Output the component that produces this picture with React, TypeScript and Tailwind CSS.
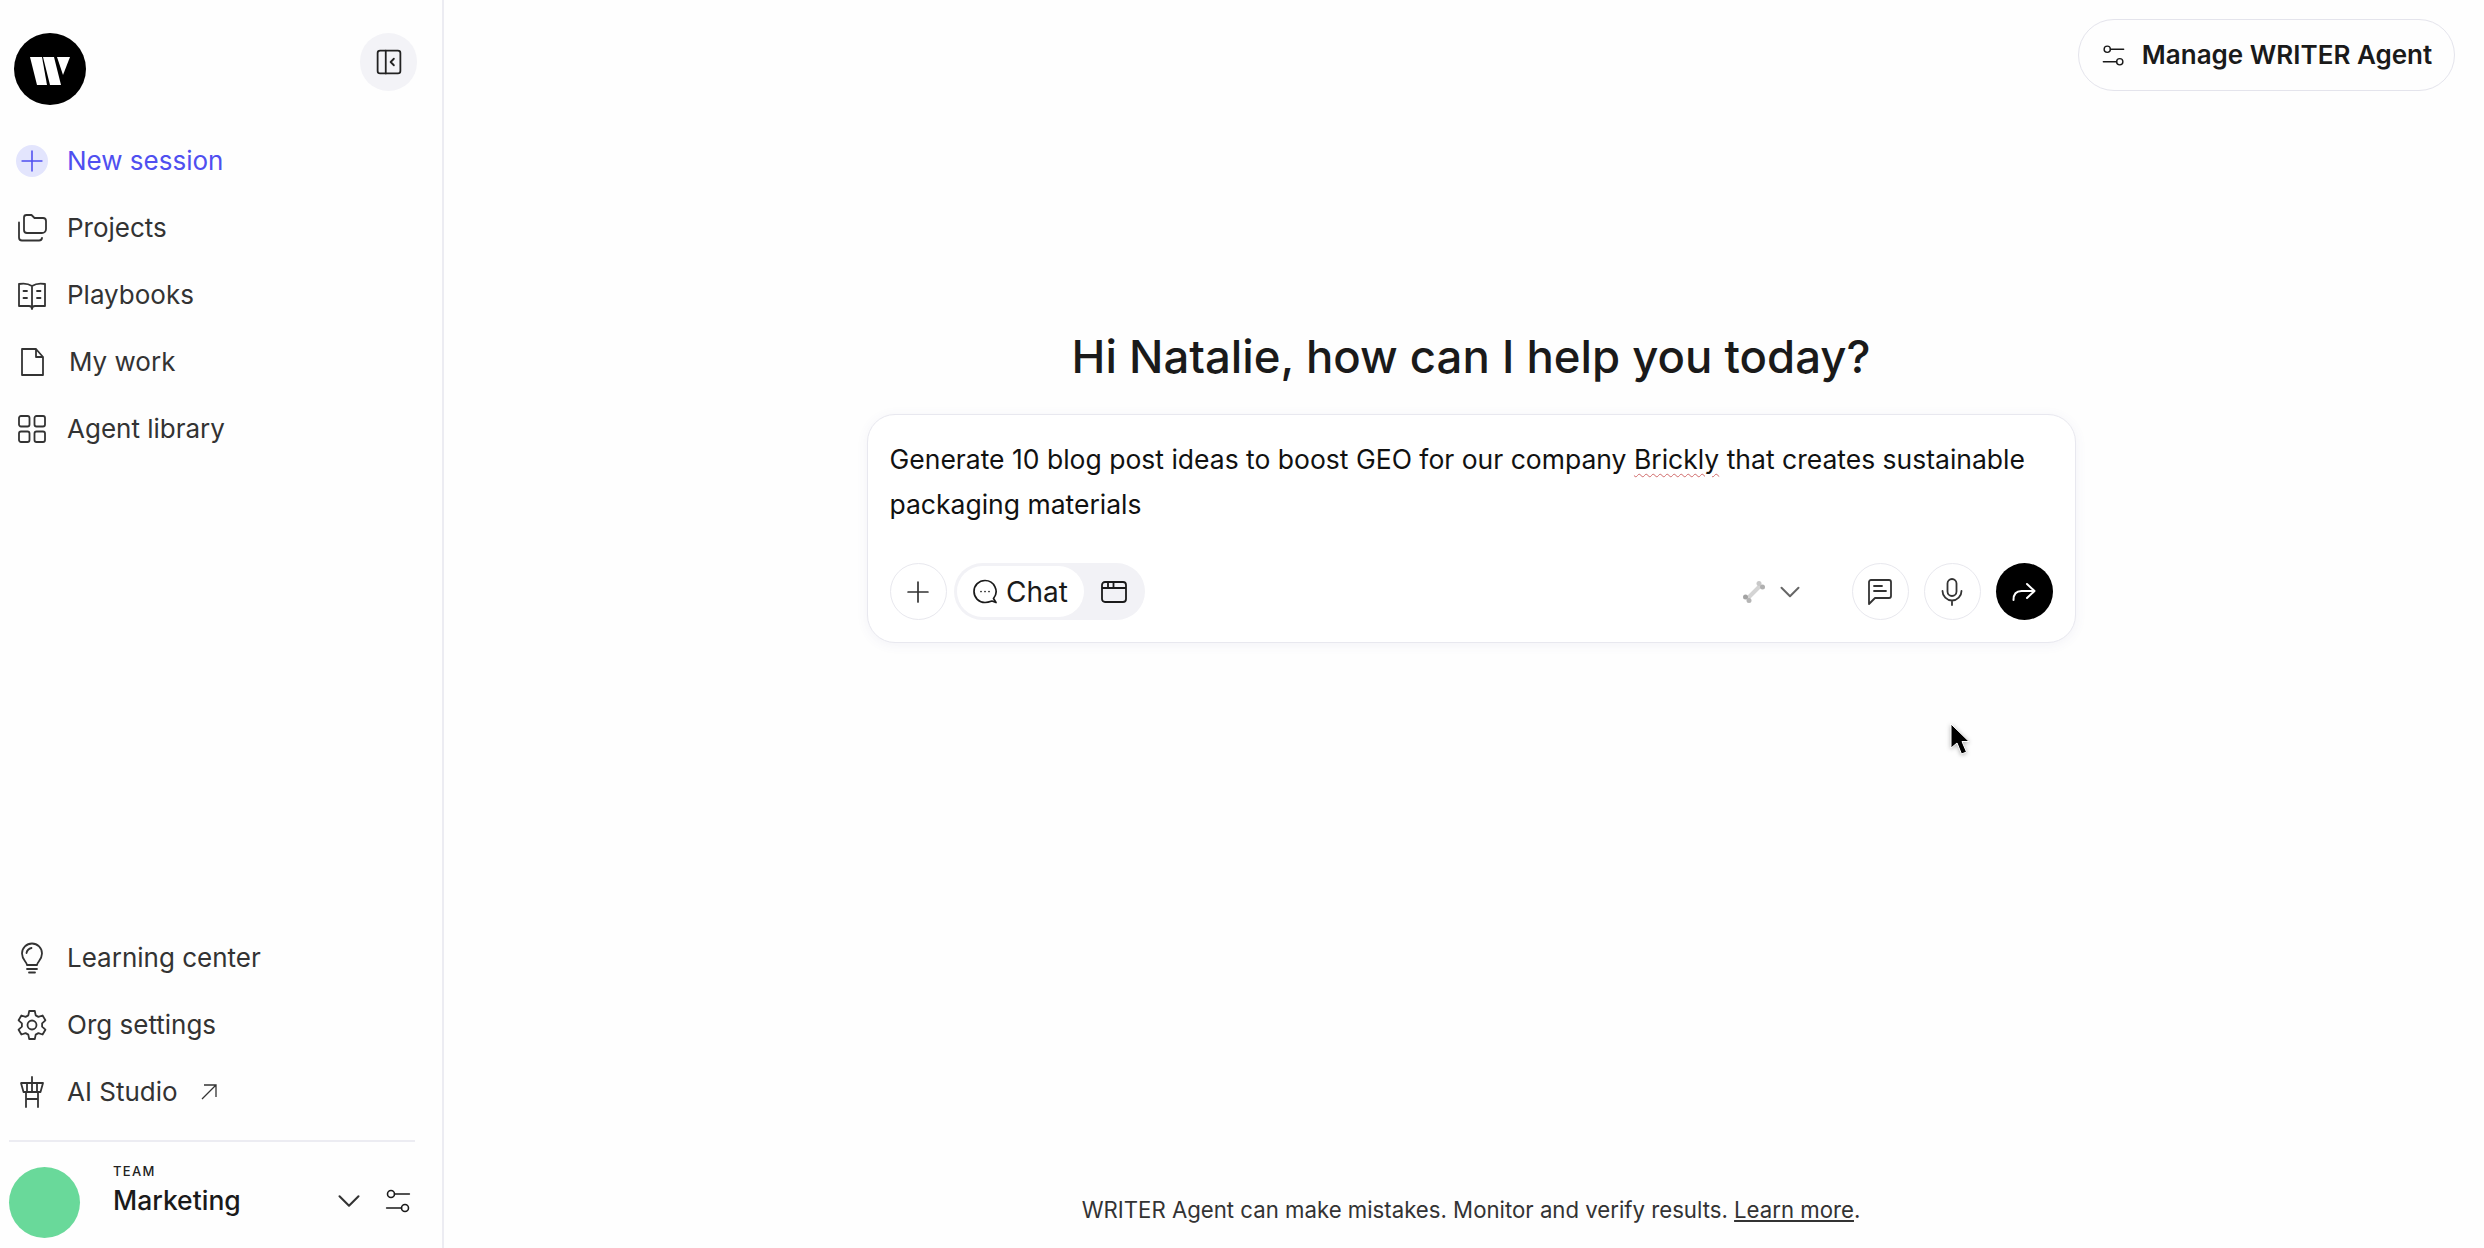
import { ReactNode } from "react";
import { ChevronDown, Plus } from "lucide-react";

const font = { fontFamily: "Inter, 'Noto Sans', sans-serif" };

const Icon = ({ size, children, className }: { size: number; children: ReactNode; className?: string }) => (
  <svg
    width={size}
    height={size}
    viewBox="0 0 32 32"
    fill="none"
    stroke="currentColor"
    strokeWidth="1.8"
    strokeLinecap="round"
    strokeLinejoin="round"
    className={className}
  >
    {children}
  </svg>
);

const FolderIcon = () => (
  <Icon size={32}>
    <path d="M8 5.500a2.500 2.500 0 0 1 2.500-2.500h5l3 3h8.500a3 3 0 0 1 3 3v8a4 4 0 0 1-4 4H11a3 3 0 0 1-3-3z" />
    <path d="M3 10.500v15a3 3 0 0 0 3 3h17a3 3 0 0 0 3-2.500" />
  </Icon>
);

const BookIcon = () => (
  <Icon size={32}>
    <path d="M16 7c-3-2-8-3-13-2v22h10c1.500 0 3 .8 3 3 0-2.200 1.500-3 3-3h10V5c-5-1-10 0-13 2zM16 7v23" />
    <path d="M7.500 12h3.500M7.500 19h3.500M21 12h3.500M21 19h3.500" />
  </Icon>
);

const DocIcon = () => (
  <Icon size={32}>
    <path d="M6 3h14l7 8v18H6zM20 3v8h7" />
  </Icon>
);

const GridIcon = () => (
  <Icon size={32}>
    <rect x="3" y="3" width="10.500" height="10.500" rx="2" />
    <rect x="18.500" y="3" width="10.500" height="10.500" rx="2" />
    <rect x="3" y="18.500" width="10.500" height="10.500" rx="2" />
    <rect x="18.500" y="18.500" width="10.500" height="10.500" rx="2" />
  </Icon>
);

const BulbIcon = () => (
  <Icon size={32}>
    <path d="M11 23c0-3-5-5-5-11.500a10 10 0 0 1 20 0C26 18 21 20 21 23z" />
    <path d="M11 27h10M13 30.500h6M10.500 11c.5-2.500 2.500-4.500 5-5" />
  </Icon>
);

const GearIcon = () => (
  <Icon size={32}>
    <circle cx="16" cy="16" r="4.500" />
    <path d="M13.200 2h5.600l.9 4.400 2.700 1.500 4.200-1.400 2.800 4.800-3.300 3v3.400l3.300 3-2.800 4.800-4.200-1.400-2.700 1.500-.9 4.400h-5.600l-.9-4.400-2.700-1.500-4.200 1.400-2.800-4.800 3.300-3v-3.400l-3.300-3 2.800-4.800 4.200 1.400 2.700-1.500z" />
  </Icon>
);

const TowerIcon = () => (
  <Icon size={32}>
    <path d="M16 1v5M5 7h22l-2.500 9h-17zM16 7v9M11 7v9M21 7v9M10 16v15M22 16v15M10 23h12" />
  </Icon>
);

const SlidersIcon = ({ size }: { size: number }) => (
  <Icon size={size} className="shrink-0">
    <circle cx="8" cy="8" r="4" />
    <circle cx="24" cy="24" r="4" />
    <path d="M12 8h17M3 24h17" />
  </Icon>
);

const NavRow = ({ icon, label, className, textClass, trailing }: {
  icon: ReactNode;
  label: string;
  className?: string;
  textClass?: string;
  trailing?: ReactNode;
}) => (
  <div className={`flex h-[67px] items-center gap-[17px] text-[#333333] ${className ?? ""}`}>
    <span className="flex w-[36px] shrink-0 items-center justify-center">{icon}</span>
    <span className={`text-[26px] ${textClass ?? ""}`}>{label}</span>
    {trailing}
  </div>
);

const RoundButton = ({ children }: { children: ReactNode }) => (
  <button className="flex h-[57px] w-[57px] items-center justify-center rounded-full border border-[#e8e8ee] text-[#333333]">
    {children}
  </button>
);

export default function App() {
  return (
    <div className="relative flex h-screen bg-[#fefefe] text-[#1a1a1a]" style={font}>
      <aside className="flex w-[444px] shrink-0 flex-col border-r-2 border-[#ececf2] pl-[14px]">
        <div className="flex items-start justify-between pt-[33px] pr-[25px]">
          <div className="flex h-[72px] w-[72px] items-center justify-center rounded-full bg-black pt-[4px]">
            <svg width="40" height="28" viewBox="0 0 40 28" fill="white">
              <polygon points="0,0 12,0 17,28 7,28" />
              <polygon points="13,0 24,0 31,28 20,28" />
              <polygon points="27,0 40,0 33,18" />
            </svg>
          </div>
          <button className="flex h-[58px] w-[57px] items-center justify-center rounded-full bg-[#f3f3f7] text-[#222222]">
            <Icon size={26}>
              <rect x="2" y="2" width="28" height="28" rx="3" strokeWidth="2.200" />
              <path d="M12 2v28M22 12l-4 4 4 4" strokeWidth="2.200" />
            </Icon>
          </button>
        </div>

        <nav className="mt-[22px] flex flex-col">
          <NavRow
            className="!text-[#4f4ff0]"
            icon={
              <span className="flex h-[32px] w-[32px] items-center justify-center rounded-full bg-[#e3e5fd]">
                <Plus size={34} strokeWidth={1.1} className="shrink-0" />
              </span>
            }
            label="New session"
          />
          <NavRow icon={<FolderIcon />} label="Projects" />
          <NavRow icon={<BookIcon />} label="Playbooks" />
          <NavRow icon={<DocIcon />} label="My work" textClass="ml-[2px]" />
          <NavRow icon={<GridIcon />} label="Agent library" />
        </nav>

        <div className="mt-auto flex flex-col">
          <NavRow icon={<BulbIcon />} label="Learning center" />
          <NavRow icon={<GearIcon />} label="Org settings" />
          <NavRow
            icon={<TowerIcon />}
            label="AI Studio"
            trailing={
              <svg width="16" height="16" viewBox="0 0 16 16" fill="none" stroke="currentColor" strokeWidth="1.300" className="ml-[6px]">
                <path d="M1 15 15 1M3 1h12v12" />
              </svg>
            }
          />
        </div>

        <div className="mt-[15px] ml-[-5px] w-[406px] border-t-2 border-[#ececf2]" />

        <div className="ml-[-5px] flex h-[106px] items-start pr-[30px]">
          <div className="mt-[25px] h-[71px] w-[71px] shrink-0 rounded-full bg-[#69d99a]" />
          <div className="mt-[19px] ml-[33px] flex flex-col">
            <span className="text-[13px] leading-[20px] font-medium tracking-[0.1em] text-[#222222]">TEAM</span>
            <span className="text-[26.500px] leading-[38px] font-medium">Marketing</span>
          </div>
          <ChevronDown size={38} strokeWidth={1.300} className="mt-[40px] mr-[16px] ml-auto text-[#333333]" />
          <div className="mt-[45px]">
            <SlidersIcon size={28} />
          </div>
        </div>
      </aside>

      <main className="flex min-w-0 flex-1 flex-col items-center pl-[14px]">
        <div className="flex w-full justify-end pt-[19px] pr-[29px]">
          <button className="flex h-[72px] w-[377px] items-center justify-center gap-[16px] rounded-full border border-[#e4e4ec] text-[26px] font-semibold">
            <SlidersIcon size={25} />
            <span className="pb-[2px]">Manage WRITER Agent</span>
          </button>
        </div>

        <h1 className="mt-[232px] text-[45.500px] leading-[68px] font-medium">Hi Natalie, how can I help you today?</h1>

        <div className="mt-[23px] w-[1209px] rounded-[28px] border border-[#e8e8ef] bg-white px-[22px] pt-[22px] pb-[22px] shadow-[0_2px_12px_rgba(80,80,160,0.07)]">
          <p className="text-[26.500px] leading-[45px] text-[#111111]">
            Generate 10 blog post ideas to boost GEO for our company{" "}
            <span className="underline decoration-[#d06a6a] decoration-wavy decoration-1 underline-offset-4">Brickly</span>{" "}
            that creates sustainable
            <br />
            packaging materials
          </p>

          <div className="mt-[36px] flex items-center">
            <RoundButton>
              <Plus size={34} strokeWidth={1.200} />
            </RoundButton>
            <div className="ml-[7px] flex h-[57px] items-center rounded-full bg-[#f2f2f6] pl-[3px]">
              <div className="flex h-[51px] w-[127px] items-center justify-center gap-[8px] rounded-full bg-white">
                <svg width="26" height="26" viewBox="0 0 26 26" fill="none" stroke="currentColor" strokeWidth="1.700" strokeLinecap="round" strokeLinejoin="round">
                  <path d="M13 1.500a11 11 0 1 0 0 22c2.500 0 5-.8 7-1.500l4 1.500-2.500-4a11 11 0 0 0-8.500-18z" />
                  <path d="M9 12.500h.01M13 12.500h.01M17 12.500h.01" />
                </svg>
                <span className="text-[28px]">Chat</span>
              </div>
              <div className="flex w-[61px] items-center justify-center">
                <svg width="26" height="22" viewBox="0 0 26 22" fill="none" stroke="currentColor" strokeWidth="1.800" strokeLinejoin="round">
                  <rect x="1" y="1" width="24" height="20" rx="3" />
                  <path d="M1 7h24M7 1v6M12.500 1v6" />
                </svg>
              </div>
            </div>

            <div className="ml-auto flex items-center">
              <svg width="24" height="24" viewBox="0 0 24 24">
                <path d="M6 18 18 6" stroke="#d4d4d4" strokeWidth="4" strokeLinecap="round" />
                <circle cx="3.500" cy="17" r="2.500" fill="#a3a3a3" />
                <circle cx="7" cy="20.500" r="2.500" fill="#b5b5b5" />
                <circle cx="17" cy="3.500" r="2.500" fill="#c8c8c8" />
                <circle cx="20.500" cy="7" r="2.500" fill="#b0b0b0" />
              </svg>
              <ChevronDown size={34} strokeWidth={1.400} className="ml-[7px] text-[#666666]" />
              <div className="ml-[45px] flex gap-[15px]">
                <RoundButton>
                  <svg width="24" height="26" viewBox="0 0 24 26" fill="none" stroke="currentColor" strokeWidth="1.800" strokeLinejoin="round" strokeLinecap="round">
                    <path d="M1 3a2 2 0 0 1 2-2h18a2 2 0 0 1 2 2v14a2 2 0 0 1-2 2H7l-6 6z" />
                    <path d="M6 7h8M6 12h12" />
                  </svg>
                </RoundButton>
                <RoundButton>
                  <svg width="22" height="28" viewBox="0 0 22 28" fill="none" stroke="currentColor" strokeWidth="1.800" strokeLinecap="round">
                    <rect x="6.500" y="1" width="9" height="17" rx="4.500" />
                    <path d="M1.500 13a9.500 9.500 0 0 0 19 0M11 22.500V27" />
                  </svg>
                </RoundButton>
                <button className="flex h-[57px] w-[57px] items-center justify-center rounded-full bg-black text-white">
                  <svg width="24" height="20" viewBox="0 0 24 20" fill="none" stroke="currentColor" strokeWidth="2" strokeLinecap="round" strokeLinejoin="round">
                    <path d="M1.500 18c0-6 2.500-9 8-9H22M15 2l7.500 7-7.500 7" />
                  </svg>
                </button>
              </div>
            </div>
          </div>
        </div>

        <p className="mt-auto pb-[20px] text-[22.200px] leading-[36px] text-[#333333]">
          WRITER Agent can make mistakes. Monitor and verify results. <span className="underline">Learn more</span>.
        </p>
      </main>

      <svg
        width="20"
        height="34"
        viewBox="0 0 20 34"
        className="absolute top-[723px] left-[1950px] drop-shadow-[0_1px_2px_rgba(0,0,0,0.3)]"
      >
        <path d="M1 1v24l6-5 4.500 11 5-2-4.500-10.500H19z" fill="black" stroke="white" strokeWidth="1" />
      </svg>
    </div>
  );
}
